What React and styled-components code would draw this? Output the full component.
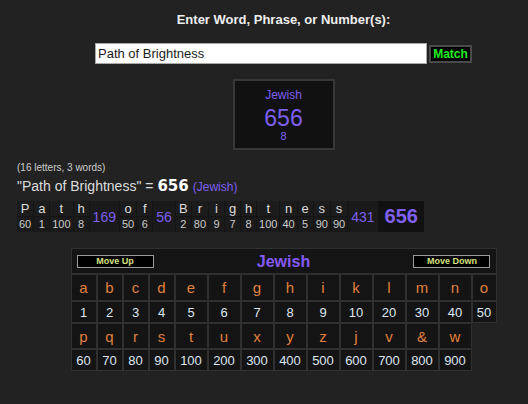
import React from 'react';
import styled, { createGlobalStyle } from 'styled-components';

const GlobalStyle = createGlobalStyle`
  body {
    margin: 0;
    background: #222222;
    font-family: "Liberation Sans", Arial, sans-serif;
    color: #dddddd;
  }
`;

const PHRASE = 'Path of Brightness';

const JEWISH = {
  a: 1, b: 2, c: 3, d: 4, e: 5, f: 6, g: 7, h: 8, i: 9, k: 10, l: 20, m: 30, n: 40, o: 50,
  p: 60, q: 70, r: 80, s: 90, t: 100, u: 200, x: 300, y: 400, z: 500, j: 600, v: 700, '&': 800, w: 900,
};

const ROW_ONE = ['a', 'b', 'c', 'd', 'e', 'f', 'g', 'h', 'i', 'k', 'l', 'm', 'n', 'o'];
const ROW_TWO = ['p', 'q', 'r', 's', 't', 'u', 'x', 'y', 'z', 'j', 'v', '&', 'w'];
const COLS = '26px 26px 26px 26px 33px 33px 33px 33px 33px 33px 33px 33px 33px 25px';

const words = PHRASE.split(' ').map((w) => {
  const letters = w.split('').map((ch) => ({ ch, val: JEWISH[ch.toLowerCase()] || 0 }));
  return { letters, total: letters.reduce((s, l) => s + l.val, 0) };
});
const grandTotal = words.reduce((s, w) => s + w.total, 0);
const reduceDigits = (n) => {
  let v = n;
  while (v > 9) v = String(v).split('').reduce((s, d) => s + Number(d), 0);
  return v;
};
const letterCount = words.reduce((s, w) => s + w.letters.length, 0);

const Page = styled.div`
  padding: 12px 0 0 0;
`;

const Centered = styled.div`
  padding-left: 39px;
  display: flex;
  flex-direction: column;
  align-items: center;
`;

const Title = styled.div`
  font-size: 13px;
  font-weight: bold;
  line-height: 16px;
  color: #eeeeee;
`;

const SearchRow = styled.div`
  margin-top: 15px;
  display: flex;
  align-items: center;
  gap: 2px;
`;

const Input = styled.div`
  box-sizing: border-box;
  width: 332px;
  height: 21px;
  background: #ffffff;
  border: 1px solid #a9a9a9;
  color: #1a1a1a;
  font-size: 13px;
  line-height: 20px;
  padding-left: 2px;
`;

const MatchButton = styled.div`
  box-sizing: border-box;
  width: 43px;
  height: 18px;
  background: #000000;
  border: 2px solid #4a4a4a;
  color: #22ee22;
  font-weight: bold;
  font-size: 12px;
  line-height: 14px;
  text-align: center;
`;

const ResultBox = styled.div`
  box-sizing: border-box;
  margin-top: 15px;
  width: 102px;
  height: 71px;
  background: #111111;
  border: 2px solid #383838;
  display: flex;
  flex-direction: column;
  align-items: center;
  padding-top: 7px;
  color: #7d5ff0;
`;

const BoxLabel = styled.div`
  font-size: 12px;
  line-height: 14px;
`;

const BoxValue = styled.div`
  font-size: 23px;
  line-height: 28px;
  margin-top: 2px;
  margin-bottom: -2px;
`;

const BoxReduced = styled.div`
  font-size: 11px;
  line-height: 12px;
`;

const Left = styled.div`
  padding-left: 17px;
`;

const Counts = styled.div`
  margin-top: 12px;
  font-size: 10px;
  line-height: 12px;
  color: #cccccc;
`;

const Equation = styled.div`
  margin-top: 2px;
  font-size: 14px;
  line-height: 20px;
  color: #dddddd;
  display: flex;
  align-items: baseline;
`;

const EqValue = styled.span`
  font-family: "DejaVu Sans", Verdana, sans-serif;
  font-weight: bold;
  font-size: 15px;
  color: #ffffff;
  margin: 0 4px 0 4px;
`;

const EqCipher = styled.span`
  font-size: 12px;
  color: #7d5ff0;
`;

const Breakdown = styled.div`
  margin-top: 4px;
  display: inline-flex;
  background: #141414;
  height: 31px;
`;

const LetterCol = styled.div`
  display: flex;
  flex-direction: column;
  min-width: 15px;
  border-right: 1px solid #141414;
`;

const LetterTop = styled.div`
  background: #1c1c1c;
  height: 15px;
  font-size: 13px;
  line-height: 15px;
  text-align: center;
  color: #dddddd;
  border-bottom: 1px solid #141414;
`;

const LetterBottom = styled.div`
  background: #1a1a1a;
  height: 15px;
  font-size: 11px;
  line-height: 15px;
  text-align: center;
  padding: 0 2px;
  color: #cccccc;
`;

const WordTotal = styled.div`
  background: #1a1a1a;
  border-right: 1px solid #141414;
  display: flex;
  align-items: center;
  padding: 0 3px;
  font-size: 14px;
  color: #7d5ff0;
`;

const GrandTotal = styled.div`
  background: #111111;
  display: flex;
  align-items: center;
  padding: 0 6px;
  font-size: 20px;
  font-weight: bold;
  color: #8060f2;
`;

const CipherGrid = styled.div`
  margin-top: 16px;
  display: grid;
  grid-template-columns: ${COLS};
  grid-template-rows: 26px 27px 22px 26px 22px;
`;

const CipherHeader = styled.div`
  grid-column: 1 / -1;
  box-sizing: border-box;
  background: #141414;
  border: 1px solid #303030;
  display: flex;
  align-items: center;
  justify-content: space-between;
  padding: 0 5px 0 5px;
`;

const MoveButton = styled.div`
  box-sizing: border-box;
  width: 77px;
  height: 13px;
  background: #000000;
  border: 1px solid #9a9a9a;
  color: #d6e07e;
  font-size: 9px;
  font-weight: bold;
  line-height: 11px;
  text-align: center;
`;

const CipherName = styled.div`
  font-size: 16px;
  font-weight: bold;
  color: #8459f4;
  padding-top: 1px;
`;

const Cell = styled.div`
  box-sizing: border-box;
  background: #141414;
  border: 1px solid #303030;
  display: flex;
  align-items: center;
  justify-content: center;
  font-size: ${(p) => (p.$letter ? '15px' : '13px')};
  color: ${(p) => (p.$letter ? '#e0803e' : '#dfe6f0')};
`;

const App = () => {
  return (
    <Page>
      <GlobalStyle />
      <Centered>
        <Title>Enter Word, Phrase, or Number(s):</Title>
        <SearchRow>
          <Input>{PHRASE}</Input>
          <MatchButton>Match</MatchButton>
        </SearchRow>
        <ResultBox>
          <BoxLabel>Jewish</BoxLabel>
          <BoxValue>{grandTotal}</BoxValue>
          <BoxReduced>{reduceDigits(grandTotal)}</BoxReduced>
        </ResultBox>
      </Centered>
      <Left>
        <Counts>({letterCount} letters, {words.length} words)</Counts>
        <Equation>
          "{PHRASE}" =<EqValue>{grandTotal}</EqValue>
          <EqCipher>(Jewish)</EqCipher>
        </Equation>
        <Breakdown>
          {words.map((w, wi) => (
            <React.Fragment key={wi}>
              {w.letters.map((l, li) => (
                <LetterCol key={li}>
                  <LetterTop>{l.ch}</LetterTop>
                  <LetterBottom>{l.val}</LetterBottom>
                </LetterCol>
              ))}
              <WordTotal>{w.total}</WordTotal>
            </React.Fragment>
          ))}
          <GrandTotal>{grandTotal}</GrandTotal>
        </Breakdown>
      </Left>
      <Centered>
        <CipherGrid>
          <CipherHeader>
            <MoveButton>Move Up</MoveButton>
            <CipherName>Jewish</CipherName>
            <MoveButton>Move Down</MoveButton>
          </CipherHeader>
          {ROW_ONE.map((ch) => <Cell key={'a' + ch} $letter>{ch}</Cell>)}
          {ROW_ONE.map((ch) => <Cell key={'b' + ch}>{JEWISH[ch]}</Cell>)}
          {ROW_TWO.map((ch) => <Cell key={'c' + ch} $letter>{ch}</Cell>)}
          <div />
          {ROW_TWO.map((ch) => <Cell key={'d' + ch}>{JEWISH[ch]}</Cell>)}
        </CipherGrid>
      </Centered>
    </Page>
  );
};

export default App;
